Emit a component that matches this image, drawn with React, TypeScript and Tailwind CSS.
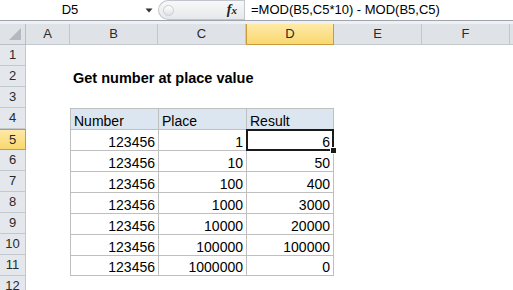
import React from 'react';

const cols = ['A', 'B', 'C', 'D', 'E', 'F', ''];

const places = [1, 10, 100, 1000, 10000, 100000, 1000000];
const results = [6, 50, 400, 3000, 20000, 100000, 0];

const font = "font-['Liberation_Sans',Arial,sans-serif]";

function Cell({ children, className = '' }: { children?: React.ReactNode; className?: string }) {
  return <div className={`h-[21px] bg-white ${className}`}>{children}</div>;
}

export default function App() {
  const rows = Array.from({ length: 12 }, (_, i) => i + 1);

  return (
    <div className={`w-[513px] h-[290px] overflow-hidden bg-white text-black ${font}`}>
      {/* formula bar */}
      <div className="flex h-[21px] border-b border-[#9ea5ae] text-[13px]">
        <div className="flex w-[158px] items-center">
          <span className="w-[140px] text-center">D5</span>
          <svg width="8" height="5" viewBox="0 0 8 5" className="ml-[5px]">
            <path d="M0.5 0.5 L7.5 0.5 L4 4.5 Z" fill="#333" />
          </svg>
        </div>
        <div className="flex w-[86px] items-center justify-between rounded-l-[10px] border border-r-0 border-[#c2c6cc] bg-gradient-to-b from-[#f7f8f9] to-[#e6e8eb] pl-[4px] pr-[7px]">
          <span className="h-[11px] w-[11px] rounded-full border border-[#c9cdd2] bg-gradient-to-b from-[#ffffff] to-[#dfe2e6]" />
          <span className="font-['Liberation_Serif',serif] text-[14px] font-bold italic leading-none text-[#222]">
            f<span className="text-[11px]">x</span>
          </span>
        </div>
        <div className="flex flex-1 items-center border-l border-[#c2c6cc] pl-[6px] whitespace-nowrap">
          =MOD(B5,C5*10) - MOD(B5,C5)
        </div>
      </div>
      <div className="h-[3px] bg-[#eef0f2]" />

      {/* sheet */}
      <div className="grid grid-cols-[26px_44px_88px_88px_88px_88px_88px_88px] text-[14px]">
        {/* header row */}
        <div className="relative h-[21px] border-r border-b border-[#b9bfc7] bg-[#dfe3e8]">
          <svg width="12" height="12" viewBox="0 0 12 12" className="absolute right-[4px] bottom-[4px]">
            <path d="M12 0 L12 12 L0 12 Z" fill="#b4b9bf" />
          </svg>
        </div>
        {cols.map((c, i) =>
          c === 'D' ? (
            <div
              key={i}
              className="flex h-[21px] items-center justify-center border-x border-b border-[#c99a3e] bg-gradient-to-b from-[#fee9a6] to-[#f9d86f] text-[13px] text-[#2a2a2a]"
            >
              {c}
            </div>
          ) : (
            <div
              key={i}
              className="flex h-[21px] items-center justify-center border-r border-b border-[#c3c8cf] bg-[#dfe3e8] text-[13px] text-[#2a2a2a]"
            >
              {c}
            </div>
          )
        )}

        {rows.map((r) => {
          const head =
            r === 5 ? (
              <div
                key={`h${r}`}
                className="flex h-[21px] items-center justify-center border-y border-r border-[#c99a3e] bg-gradient-to-b from-[#fee9a6] to-[#f9d86f] text-[13px] text-[#2a2a2a]"
              >
                {r}
              </div>
            ) : (
              <div
                key={`h${r}`}
                className="flex h-[21px] items-center justify-center border-r border-b border-[#c3c8cf] bg-[#e4e7eb] text-[13px] text-[#2a2a2a]"
              >
                {r}
              </div>
            );

          if (r === 2) {
            return (
              <React.Fragment key={r}>
                {head}
                <Cell />
                <Cell className="relative z-10 flex items-end pb-[2px] pl-[3px]">
                  <span className="whitespace-nowrap text-[14.5px] font-bold leading-[14px]">
                    Get number at place value
                  </span>
                </Cell>
                <Cell />
                <Cell />
                <Cell />
                <Cell />
                <Cell />
              </React.Fragment>
            );
          }

          if (r === 4) {
            return (
              <React.Fragment key={r}>
                {head}
                <Cell />
                <div className="flex h-[21px] items-end border-l border-t border-[#bfbfbf] bg-[#dce6f1] pb-[1px] pl-[3px] leading-[14px]">
                  Number
                </div>
                <div className="flex h-[21px] items-end border-l border-t border-[#bfbfbf] bg-[#dce6f1] pb-[1px] pl-[3px] leading-[14px]">
                  Place
                </div>
                <div className="flex h-[21px] items-end border-x border-t border-[#bfbfbf] bg-[#dce6f1] pb-[1px] pl-[3px] leading-[14px]">
                  Result
                </div>
                <Cell />
                <Cell />
                <Cell />
              </React.Fragment>
            );
          }

          if (r >= 5 && r <= 11) {
            const i = r - 5;
            const last = r === 11 ? 'border-b' : '';
            return (
              <React.Fragment key={r}>
                {head}
                <Cell />
                <div className={`flex h-[21px] items-end justify-end border-l border-t border-[#bfbfbf] bg-white pb-[1px] pr-[3px] leading-[14px] ${last}`}>
                  123456
                </div>
                <div className={`flex h-[21px] items-end justify-end border-l border-t border-[#bfbfbf] bg-white pb-[1px] pr-[3px] leading-[14px] ${last}`}>
                  {places[i]}
                </div>
                <div className={`relative flex h-[21px] items-end justify-end border-x border-t border-[#bfbfbf] bg-white pb-[1px] pr-[3px] leading-[14px] ${last} ${r === 5 ? 'z-10' : ''}`}>
                  {results[i]}
                  {r === 5 && (
                    <>
                      <span className="absolute -top-[1px] -left-[1px] -right-[1px] -bottom-[1px] border-2 border-[#1a1a1a]" />
                      <span className="absolute -right-[4px] -bottom-[4px] h-[7px] w-[7px] border border-white bg-[#1a1a1a]" />
                    </>
                  )}
                </div>
                <Cell />
                <Cell />
                <Cell />
              </React.Fragment>
            );
          }

          return (
            <React.Fragment key={r}>
              {head}
              <Cell />
              <Cell />
              <Cell />
              <Cell />
              <Cell />
              <Cell />
              <Cell />
            </React.Fragment>
          );
        })}
      </div>
    </div>
  );
}
